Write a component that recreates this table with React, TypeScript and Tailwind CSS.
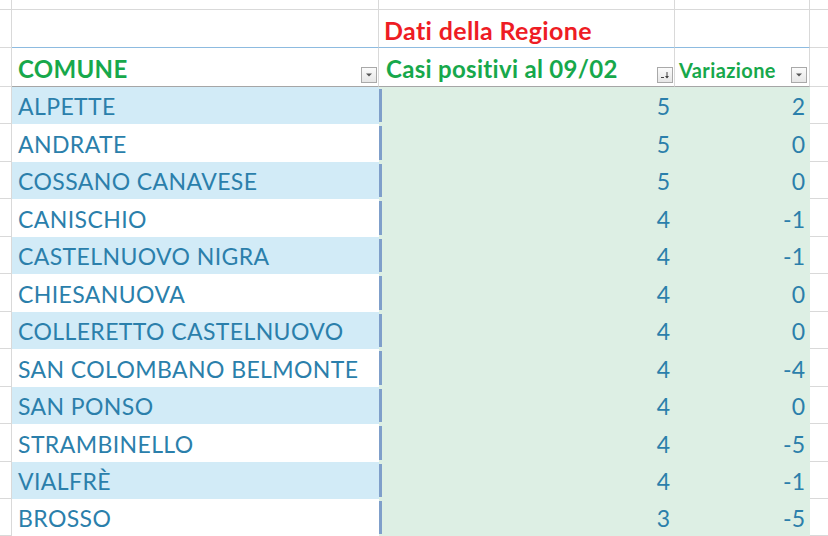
import React from "react";

const rows: { name: string; casi: number; var: number; h: string }[] = [
  { name: "ALPETTE", casi: 5, var: 2, h: "h-[37px]" },
  { name: "ANDRATE", casi: 5, var: 0, h: "h-[38px]" },
  { name: "COSSANO CANAVESE", casi: 5, var: 0, h: "h-[37px]" },
  { name: "CANISCHIO", casi: 4, var: -1, h: "h-[38px]" },
  { name: "CASTELNUOVO NIGRA", casi: 4, var: -1, h: "h-[37px]" },
  { name: "CHIESANUOVA", casi: 4, var: 0, h: "h-[38px]" },
  { name: "COLLERETTO CASTELNUOVO", casi: 4, var: 0, h: "h-[37px]" },
  { name: "SAN COLOMBANO BELMONTE", casi: 4, var: -4, h: "h-[38px]" },
  { name: "SAN PONSO", casi: 4, var: 0, h: "h-[37px]" },
  { name: "STRAMBINELLO", casi: 4, var: -5, h: "h-[38px]" },
  { name: "VIALFRÈ", casi: 4, var: -1, h: "h-[37px]" },
  { name: "BROSSO", casi: 3, var: -5, h: "h-[37px]" },
];

const cols = "grid grid-cols-[12px_367px_296px_135px_18px]";

function FilterBtn({ sort }: { sort?: boolean }) {
  return (
    <div className="w-[16px] h-[16px] border border-[#a9a9a9] bg-gradient-to-b from-[#fbfbfb] to-[#e6e6e6] flex items-center justify-center shrink-0 mb-[3px]">
      {sort ? (
        <svg width="10" height="10" viewBox="0 0 10 10">
          <line x1="1" y1="7.5" x2="4" y2="7.5" stroke="#444" strokeWidth="1" />
          <line x1="7" y1="2" x2="7" y2="8" stroke="#444" strokeWidth="1" />
          <path d="M5 6 L7 8.5 L9 6 Z" fill="#444" />
        </svg>
      ) : (
        <svg width="8" height="6" viewBox="0 0 8 6">
          <path d="M1 1.5 L7 1.5 L4 4.5 Z" fill="#555" />
        </svg>
      )}
    </div>
  );
}

export default function App() {
  const font = { fontFamily: "Lato, 'Open Sans', sans-serif" };
  return (
    <div className="w-[828px] h-[536px] overflow-hidden bg-white" style={font}>
      {/* row 1 */}
      <div className={`${cols} h-[10px]`}>
        <div className="border-r border-b border-[#d9d9d9]" />
        <div className="border-r border-b border-[#d9d9d9]" />
        <div className="border-r border-b border-[#d9d9d9]" />
        <div className="border-r border-b border-[#d9d9d9]" />
        <div className="border-b border-[#d9d9d9]" />
      </div>
      {/* row 2 */}
      <div className={`${cols} h-[38px]`}>
        <div className="border-r border-b border-[#d9d9d9]" />
        <div className="border-r border-[#d9d9d9] border-b border-b-[#8dbbe0]" />
        <div className="border-r border-[#d9d9d9] border-b border-b-[#8dbbe0] flex items-end pl-[5px] pb-[4px]">
          <span className="text-[25px] leading-none font-bold tracking-[0.35px] text-[#ee1c24] whitespace-nowrap">Dati della Regione</span>
        </div>
        <div className="border-r border-[#d9d9d9] border-b border-b-[#8dbbe0]" />
        <div className="border-b border-[#d9d9d9]" />
      </div>
      {/* header */}
      <div className={`${cols} h-[39px]`}>
        <div className="border-r border-b border-[#d9d9d9]" />
        <div className="border-r border-[#d9d9d9] border-b border-b-[#a6a6a6] flex items-end justify-between pl-[6px] pr-[1px]">
          <span className="text-[24px] leading-none font-bold tracking-[0.3px] text-[#17a84b] mb-[5px]">COMUNE</span>
          <FilterBtn />
        </div>
        <div className="border-r border-[#d9d9d9] border-b border-b-[#a6a6a6] flex items-end justify-between pl-[7px] pr-[1px]">
          <span className="text-[24px] leading-none font-bold tracking-[0.3px] text-[#17a84b] mb-[5px] whitespace-nowrap">Casi positivi al 09/02</span>
          <FilterBtn sort />
        </div>
        <div className="border-r border-[#d9d9d9] border-b border-b-[#a6a6a6] flex items-end justify-between pl-[4px] pr-[2px]">
          <span className="text-[20px] leading-none font-bold tracking-[0.4px] text-[#17a84b] mb-[6px]">Variazione</span>
          <FilterBtn />
        </div>
        <div className="border-b border-[#d9d9d9]" />
      </div>
      {rows.map((r, i) => (
        <div key={r.name} className={`${cols} ${r.h}`}>
          <div className="border-r border-b border-[#d9d9d9]" />
          <div className={`${i % 2 === 0 ? "bg-[#d2ebf7]" : "bg-white"} flex items-center pl-[6px] pt-[2px]`}>
            <span className="text-[23px] leading-none tracking-[0.4px] text-[#2b7fab] whitespace-nowrap">{r.name}</span>
          </div>
          <div className="bg-[#ddefe4] flex items-center pr-[5px]">
            <div className="self-stretch my-[2px] w-[3px] bg-[#7f9fca]" />
            <span className="ml-auto text-[23px] leading-none text-[#2b7fab] pt-[2px]">{r.casi}</span>
          </div>
          <div className="bg-[#ddefe4] flex items-center justify-end pr-[5px] pt-[2px]">
            <span className="text-[23px] leading-none text-[#2b7fab]">{r.var}</span>
          </div>
          <div className="border-b border-[#d9d9d9]" />
        </div>
      ))}
    </div>
  );
}
